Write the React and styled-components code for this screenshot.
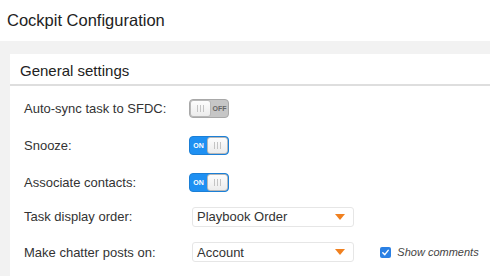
import React, { useState } from "react";
import styled, { createGlobalStyle } from "styled-components";

const GlobalStyle = createGlobalStyle`
   html, body {
      margin: 0;
      padding: 0;
      background: #fff;
      font-family: "Liberation Sans", Arial, sans-serif;
   }
`;

const Page = styled.div`
   width: 490px;
   height: 276px;
   overflow: hidden;
`;

const Title = styled.div`
   height: 41px;
   padding-left: 7px;
   display: flex;
   align-items: center;
   font-size: 16.5px;
   color: #222;
`;

const Content = styled.div`
   background: #f2f2f2;
   padding: 13px 0 0 10px;
   height: 235px;
   box-sizing: border-box;
`;

const Panel = styled.div`
   background: #fff;
   height: 100%;
`;

const PanelHeader = styled.div`
   height: 32px;
   padding-left: 10px;
   display: flex;
   align-items: center;
   font-size: 15px;
   color: #222;
   border-bottom: 2px solid #dedede;
   padding-top: 2px;
   box-sizing: content-box;
   height: 28px;
`;

const Rows = styled.div`
   padding: 4px 0 0 14px;
`;

const Row = styled.div`
   display: grid;
   grid-template-columns: 165px auto auto;
   align-items: center;
   height: ${(p) => p.h || 36}px;
`;

const Label = styled.div`
   font-size: 13px;
   color: #333;
`;

const ToggleBox = styled.div`
   width: 40px;
   height: 19px;
   box-sizing: border-box;
   border-radius: 4px;
   border: 1px solid ${(p) => (p.on ? "#1b7fd6" : "#a8a8a8")};
   background: ${(p) => (p.on ? "#1f90f2" : "#c6c6c6")};
   display: flex;
   flex-direction: ${(p) => (p.on ? "row" : "row-reverse")};
   align-items: center;
   cursor: pointer;
   overflow: hidden;
`;

const ToggleText = styled.span`
   flex: 1;
   text-align: center;
   font-size: 7px;
   font-weight: bold;
   color: ${(p) => (p.on ? "#fff" : "#666")};
`;

const Knob = styled.span`
   width: 21px;
   height: 17px;
   box-sizing: border-box;
   background: linear-gradient(#fdfdfd, #ececec);
   border-radius: 3px;
   border: 1px solid #b8b8b8;
   display: flex;
   align-items: center;
   justify-content: center;
   gap: 2px;
`;

const Grip = styled.i`
   width: 1px;
   height: 7px;
   background: #c4c4c4;
`;

const Toggle = ({ initial }) => {
   const [on, setOn] = useState(initial);
   return (
      <ToggleBox on={on ? 1 : 0} onClick={() => setOn(!on)}>
         <ToggleText on={on ? 1 : 0}>{on ? "ON" : "OFF"}</ToggleText>
         <Knob>
            <Grip />
            <Grip />
            <Grip />
         </Knob>
      </ToggleBox>
   );
};

const Select = styled.div`
   margin-left: 3px;
   width: 162px;
   height: 20px;
   box-sizing: border-box;
   border: 1px solid #e6e6e6;
   border-radius: 3px;
   display: flex;
   align-items: center;
   justify-content: space-between;
   padding: 0 8px 0 4px;
   font-size: 13px;
   color: #333;
`;

const Arrow = styled.span`
   width: 0;
   height: 0;
   border-left: 5px solid transparent;
   border-right: 5px solid transparent;
   border-top: 6px solid #f0801f;
`;

const CheckWrap = styled.label`
   margin-left: 15px;
   display: flex;
   align-items: center;
   gap: 6px;
   font-size: 11px;
   font-style: italic;
   color: #444;
`;

const Box = styled.span`
   width: 11px;
   height: 11px;
   border-radius: 2px;
   background: #2a80e4;
   display: flex;
   align-items: center;
   justify-content: center;
`;

export default function App() {
   return (
      <Page>
         <GlobalStyle />
         <Title>Cockpit Configuration</Title>
         <Content>
            <Panel>
               <PanelHeader>General settings</PanelHeader>
               <Rows>
                  <Row>
                     <Label>Auto-sync task to SFDC:</Label>
                     <Toggle initial={false} />
                  </Row>
                  <Row h={38}>
                     <Label>Snooze:</Label>
                     <Toggle initial={true} />
                  </Row>
                  <Row>
                     <Label>Associate contacts:</Label>
                     <Toggle initial={true} />
                  </Row>
                  <Row h={33}>
                     <Label>Task display order:</Label>
                     <Select>
                        Playbook Order
                        <Arrow />
                     </Select>
                  </Row>
                  <Row h={38}>
                     <Label>Make chatter posts on:</Label>
                     <Select>
                        Account
                        <Arrow />
                     </Select>
                     <CheckWrap>
                        <Box>
                           <svg width="9" height="9" viewBox="0 0 10 10">
                              <path d="M2 5.2 L4.2 7.4 L8 2.6" fill="none" stroke="#fff" strokeWidth="1.6" strokeLinecap="round" strokeLinejoin="round" />
                           </svg>
                        </Box>
                        Show comments
                     </CheckWrap>
                  </Row>
               </Rows>
            </Panel>
         </Content>
      </Page>
   );
}
